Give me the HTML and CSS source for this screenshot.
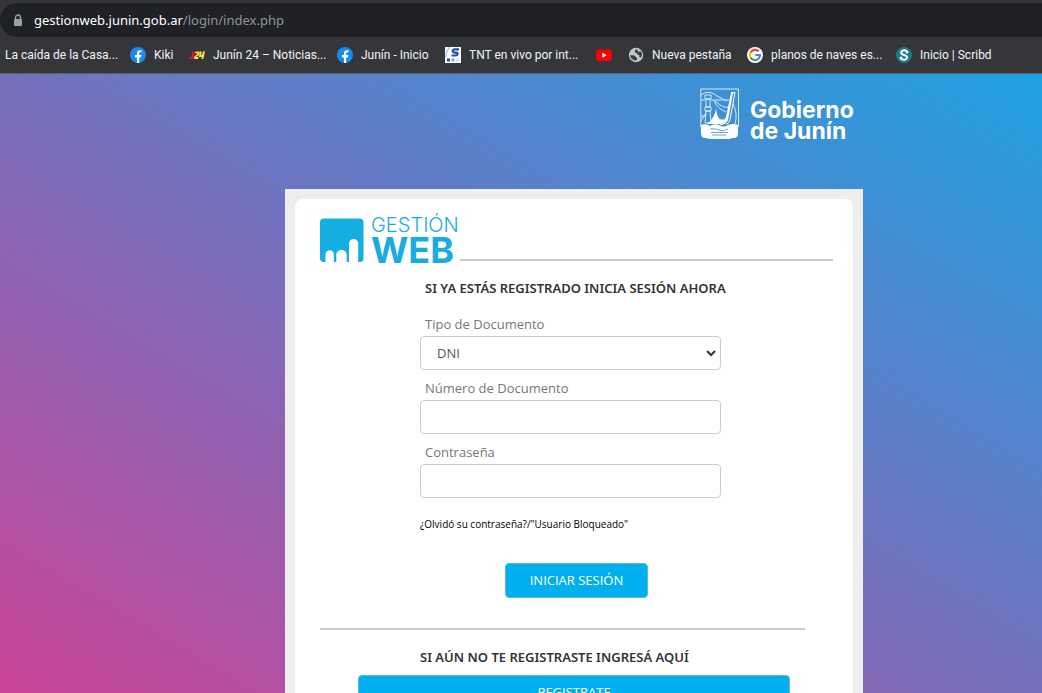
FILE: index.html
```html
<!DOCTYPE html>
<html lang="es">
<head>
<meta charset="utf-8">
<title>Gestión Web</title>
<link rel="stylesheet" href="styles.css">
</head>
<body>
<header class="browser">
  <div class="address">
    <svg class="lock" viewBox="0 0 10 13"><path d="M2.500 6V3.500a2.500 2.500 0 0 1 5 0V6" fill="none" stroke="#9aa0a6" stroke-width="1.400"/><rect x="1" y="5" width="8" height="7" rx="1" fill="#9aa0a6"/></svg>
    <span class="url"><span class="host">gestionweb.junin.gob.ar</span>/login/index.php</span>
  </div>
  <nav class="bookmarks">
    <a href="#">La caída de la Casa...</a>
    <a href="#"><svg viewBox="0 0 16 16"><circle cx="8" cy="8" r="8" fill="#168cf0"/><path d="M7 16v-5.500H5V8h2V6.300C7 4.200 8.200 3.200 10 3.200l1.500.1v2h-1c-1 0-1.300.5-1.300 1.200V8h2.200l-.4 2.500H9.200V16z" fill="#fff"/></svg>Kiki</a>
    <a href="#"><svg viewBox="0 0 16 16"><path d="M3.500 4.500H6L4.600 11Q4.300 12 3 12H.3l.3-1.800h1.700z" fill="#e5123f"/><path d="M6.500 4.500h4.200L10 8l-2.700 2h2.300l-.4 2H4.900l.5-2.500L8 7.200l.2-.9H6.100zM11 4.500h2L12 8h1l1-3.500h2L14.300 12h-2l.6-2H9.800l.4-2z" fill="#f7df3d"/></svg>Junín 24 – Noticias...</a>
    <a href="#"><svg viewBox="0 0 16 16"><circle cx="8" cy="8" r="8" fill="#168cf0"/><path d="M7 16v-5.500H5V8h2V6.300C7 4.200 8.200 3.200 10 3.200l1.500.1v2h-1c-1 0-1.300.5-1.300 1.200V8h2.200l-.4 2.500H9.200V16z" fill="#fff"/></svg>Junín - Inicio</a>
    <a href="#"><svg viewBox="0 0 16 16"><path d="M0 0h16v16H0z" fill="#fff"/><path d="M5 0Q1 4 1 10" fill="none" stroke="#a9c8e8" stroke-width="1.500"/><path d="M14 2.300H10Q7.800 2.300 7.800 4t2 1.600h1.500q1.500.1 1.300 1.500-.2 1.400-2 1.400H6.500" fill="none" stroke="#1c4fae" stroke-width="2.200"/><path d="M2 11.500h3v3H2z" fill="#1c4fae"/><path d="M6.500 11.500h3v3h-3z" fill="#7da7db"/><path d="M11 11.500h3v3h-3z" fill="#d3e2f3"/></svg>TNT en vivo por int...</a>
    <a href="#" aria-label="YouTube"><svg viewBox="0 0 16 16"><rect y="2.500" width="16" height="11.500" rx="3" fill="#f00"/><path d="M6.400 5.800v5l4.300-2.500z" fill="#fff"/></svg></a>
    <a href="#"><svg viewBox="0 0 16 16"><circle cx="8" cy="8" r="7.200" fill="#c4c7cb"/><path d="M2 8.200h3.500q2.300.2 2.300 2.300H9v2.600q-2.500 1-5-1.100Q2 10.300 2 8.200zM8.500 2Q6.500 3 6.600 4.600q.3 1.400 2.300 1.300l.4 1.800 1.800.1.500 2.600h1.600Q15 7 12.700 4.300L10.500 4.800z" fill="#3b3d41"/></svg>Nueva pestaña</a>
    <a href="#"><svg viewBox="0 0 16 16"><circle cx="8" cy="8" r="8" fill="#fff"/><g fill="none" stroke-width="2.200"><path d="M11.700 4.500A5 5 0 0 0 3.600 5.600" stroke="#ea4335"/><path d="M3.600 5.600a5 5 0 0 0 0 4.800" stroke="#fbbc05"/><path d="M3.600 10.400a5 5 0 0 0 7.800 1.300" stroke="#34a853"/><path d="M11.400 11.700Q13 10.300 12.900 8H8.200" stroke="#4285f4"/></g></svg>planos de naves es...</a>
    <a href="#"><svg viewBox="0 0 16 16"><circle cx="8" cy="8" r="8" fill="#1e7b85"/><path d="M11 4.200Q8.500 2.400 6 4 4.200 6 6.300 7.300L10 8.800q2 1.500.3 3.200-2.500 1.600-5.300-.3" fill="none" stroke="#fff" stroke-width="2"/><circle cx="11" cy="5" r="1.500" fill="#fff"/><circle cx="5" cy="11" r="1.500" fill="#fff"/></svg>Inicio | Scribd</a>
  </nav>
</header>
<main class="page">
  <div class="gov">
    <svg class="shield" viewBox="0 0 40 52"><g fill="none" stroke="#e6f4fc" stroke-width=".9"><path d="M.8 1h37.700v38M.8 1v38"/><path d="M1 7Q9 1 17 8q6 3 10 5M1 12h4M11 12h18M14 13q4 8 12 11M15 13q9 8 13 6M33 16q5 9 2 20M1 28h5M1 33l5-8"/><path d="M5 7h6v4H5zM6 11h4v8H6zM5 19h6v4H5zM6 23h4l1 12H5z"/></g><path d="M31 4.500h4l-5 27q-1 4-4 5" fill="none" stroke="#fff"/><path d="M31 5h2l-5 27q-2 5-8 5l-2-7q6 4 8-1zM16 20q0 9 8 16H7q8-6 9-16z" fill="#fff"/><path d="M1 37q5-2 9 1 5-3 9-1 5 3 9 0 5-2 10 0v8q0 5-4 5-3 0-5 1H10q-2-1-5-1-4 0-4-5z" fill="#fff"/><path d="M10 41q5-1 9 1t9-1M11 44.500h17M12 47h14" fill="none" stroke="#3b92d3" stroke-width=".8"/></svg>
    <div class="gov-name">Gobierno<br>de Junín</div>
  </div>
  <section class="card">
    <div class="brand">
      <svg class="mark" viewBox="0 0 44 45"><rect y="0.500" width="43.500" height="43.500" rx="4" fill="#15aee3"/><path d="M5.500 45V36.500a4.200 4.200 0 0 1 8.400 0V45zM16.300 45V37a5.200 5.200 0 0 1 10.400 0v8zM29 45V25.500a4.600 4.600 0 0 1 9.200 0V45z" fill="#fff"/></svg>
      <div class="brand-name"><span class="thin">GESTIÓN</span><span class="thick">WEB</span></div>
      <hr class="rule">
    </div>
    <form class="login">
      <h1>SI YA ESTÁS REGISTRADO INICIA SESIÓN AHORA</h1>
      <label for="tipo">Tipo de Documento</label>
      <div class="select-box">
        <select id="tipo"><option>DNI</option></select>
        <svg class="chevron" viewBox="0 0 10 7"><path d="M1 1l4 4 4-4" fill="none" stroke="#333" stroke-width="2"/></svg>
      </div>
      <label for="numero">Número de Documento</label>
      <input id="numero" type="text">
      <label for="clave">Contraseña</label>
      <input id="clave" type="password">
      <a class="forgot" href="#">¿Olvidó su contraseña?/"Usuario Bloqueado"</a>
      <button class="btn submit" type="button">INICIAR SESIÓN</button>
    </form>
    <hr class="rule divider">
    <div class="register">
      <h2>SI AÚN NO TE REGISTRASTE INGRESÁ AQUÍ</h2>
      <button class="btn" type="button">REGISTRATE</button>
    </div>
  </section>
</main>
</body>
</html>
```

FILE: styles.css
```css
* { box-sizing: border-box; }
body {
  margin: 0;
  height: 100vh;
  display: flex;
  flex-direction: column;
  overflow: hidden;
  font-family: "Open Sans", "Noto Sans", sans-serif;
  font-size: 13px;
  color: #333;
}
.browser {
  flex: none;
  padding-top: 3px;
  background: #35363a;
  border-bottom: 1px solid #5c6068;
}
.address {
  display: flex;
  align-items: center;
  gap: 11px;
  height: 34px;
  padding-left: 13px;
  border-radius: 17px 0 0 17px;
  background: #202124;
}
.lock { width: 10px; height: 13px; }
.url { color: #8f9398; font-family: "Noto Sans", sans-serif; font-size: 13px; }
.host { color: #fff; }
.bookmarks {
  display: grid;
  grid-template-columns: 125px 59px 148px 108px 151px 32px 119px 149px 1fr;
  height: 36px;
  padding-left: 5px;
}
.bookmarks a {
  display: flex;
  align-items: center;
  gap: 8px;
  color: #f1f3f4;
  font-family: Roboto, sans-serif;
  font-size: 12px;
  text-decoration: none;
  white-space: nowrap;
}
.bookmarks svg { flex: none; width: 16px; height: 16px; }
.page {
  flex: 1;
  min-height: 0;
  padding-left: 285px;
  overflow: hidden;
  background: linear-gradient(to top right, #cb4498, #7570bd 50%, #1fa2e2);
}
.gov {
  display: flex;
  width: 578px;
  height: 115px;
  padding: 14px 0 0 415px;
  gap: 10px;
}
.shield { flex: none; width: 40px; height: 52px; }
.gov-name {
  padding-top: 12px;
  color: #fff;
  font: 700 23px/21px Inter, sans-serif;
  white-space: nowrap;
}
.card {
  position: relative;
  z-index: 0;
  width: 578px;
  min-height: 600px;
  padding: 24px 30px 30px 35px;
  background: #eee;
}
.card::before {
  content: "";
  position: absolute;
  z-index: -1;
  inset: 10px;
  border-radius: 8px;
  background: #fff;
}
.brand { display: flex; align-items: flex-end; height: 52px; }
.mark { flex: none; width: 44px; height: 45px; margin-bottom: 2px; }
.brand-name {
  display: flex;
  flex-direction: column;
  width: 96px;
  padding-left: 7px;
  color: #1aabdf;
  font-family: Inter, sans-serif;
  white-space: nowrap;
}
.thin { font-size: 20px; line-height: 22px; font-weight: 300; }
.thick { font-size: 36px; line-height: 29px; font-weight: 700; }
.rule {
  flex: 1;
  height: 2px;
  margin: 0 0 4px;
  border: 0;
  background: #ccc;
}
.login {
  display: flex;
  flex-direction: column;
  width: 301px;
  margin-left: 100px;
}
h1, h2 { margin: 0; font-size: 13px; line-height: 20px; font-weight: 600; font-family: "Noto Sans", sans-serif; white-space: nowrap; }
h1 { padding: 13px 0 14px 5px; }
label { padding-left: 5px; color: #777; font-size: 13px; line-height: 24px; }
.login input, .login select {
  width: 100%;
  height: 34px;
  margin-bottom: 6px;
  padding: 0 12px;
  border: 1px solid #ccc;
  border-radius: 4px;
  background: #fff;
  color: #555;
  font: 13px "Open Sans", sans-serif;
}
.login select { appearance: none; padding-left: 16px; }
.select-box { display: grid; }
.select-box > * { grid-area: 1 / 1; }
.chevron { width: 10px; height: 7px; margin: 14px 5px 0 0; justify-self: end; pointer-events: none; }
.forgot {
  padding: 12px 0 31px;
  color: #000;
  font-size: 10px;
  line-height: 16px;
  text-decoration: none;
  white-space: nowrap;
}
.btn {
  height: 35px;
  padding: 0 0 2px;
  border: 1px solid #5bb8dd;
  border-radius: 4px;
  background: #00b0ee;
  color: #fff;
  font: 13px/20px "Open Sans", sans-serif;
}
.submit { width: 143px; margin-left: 85px; }
.divider { margin: 30px 28px 0 0; }
.register { display: flex; flex-direction: column; padding: 17px 43px 0 38px; }
h2 { padding: 0 0 8px 62px; }
```
